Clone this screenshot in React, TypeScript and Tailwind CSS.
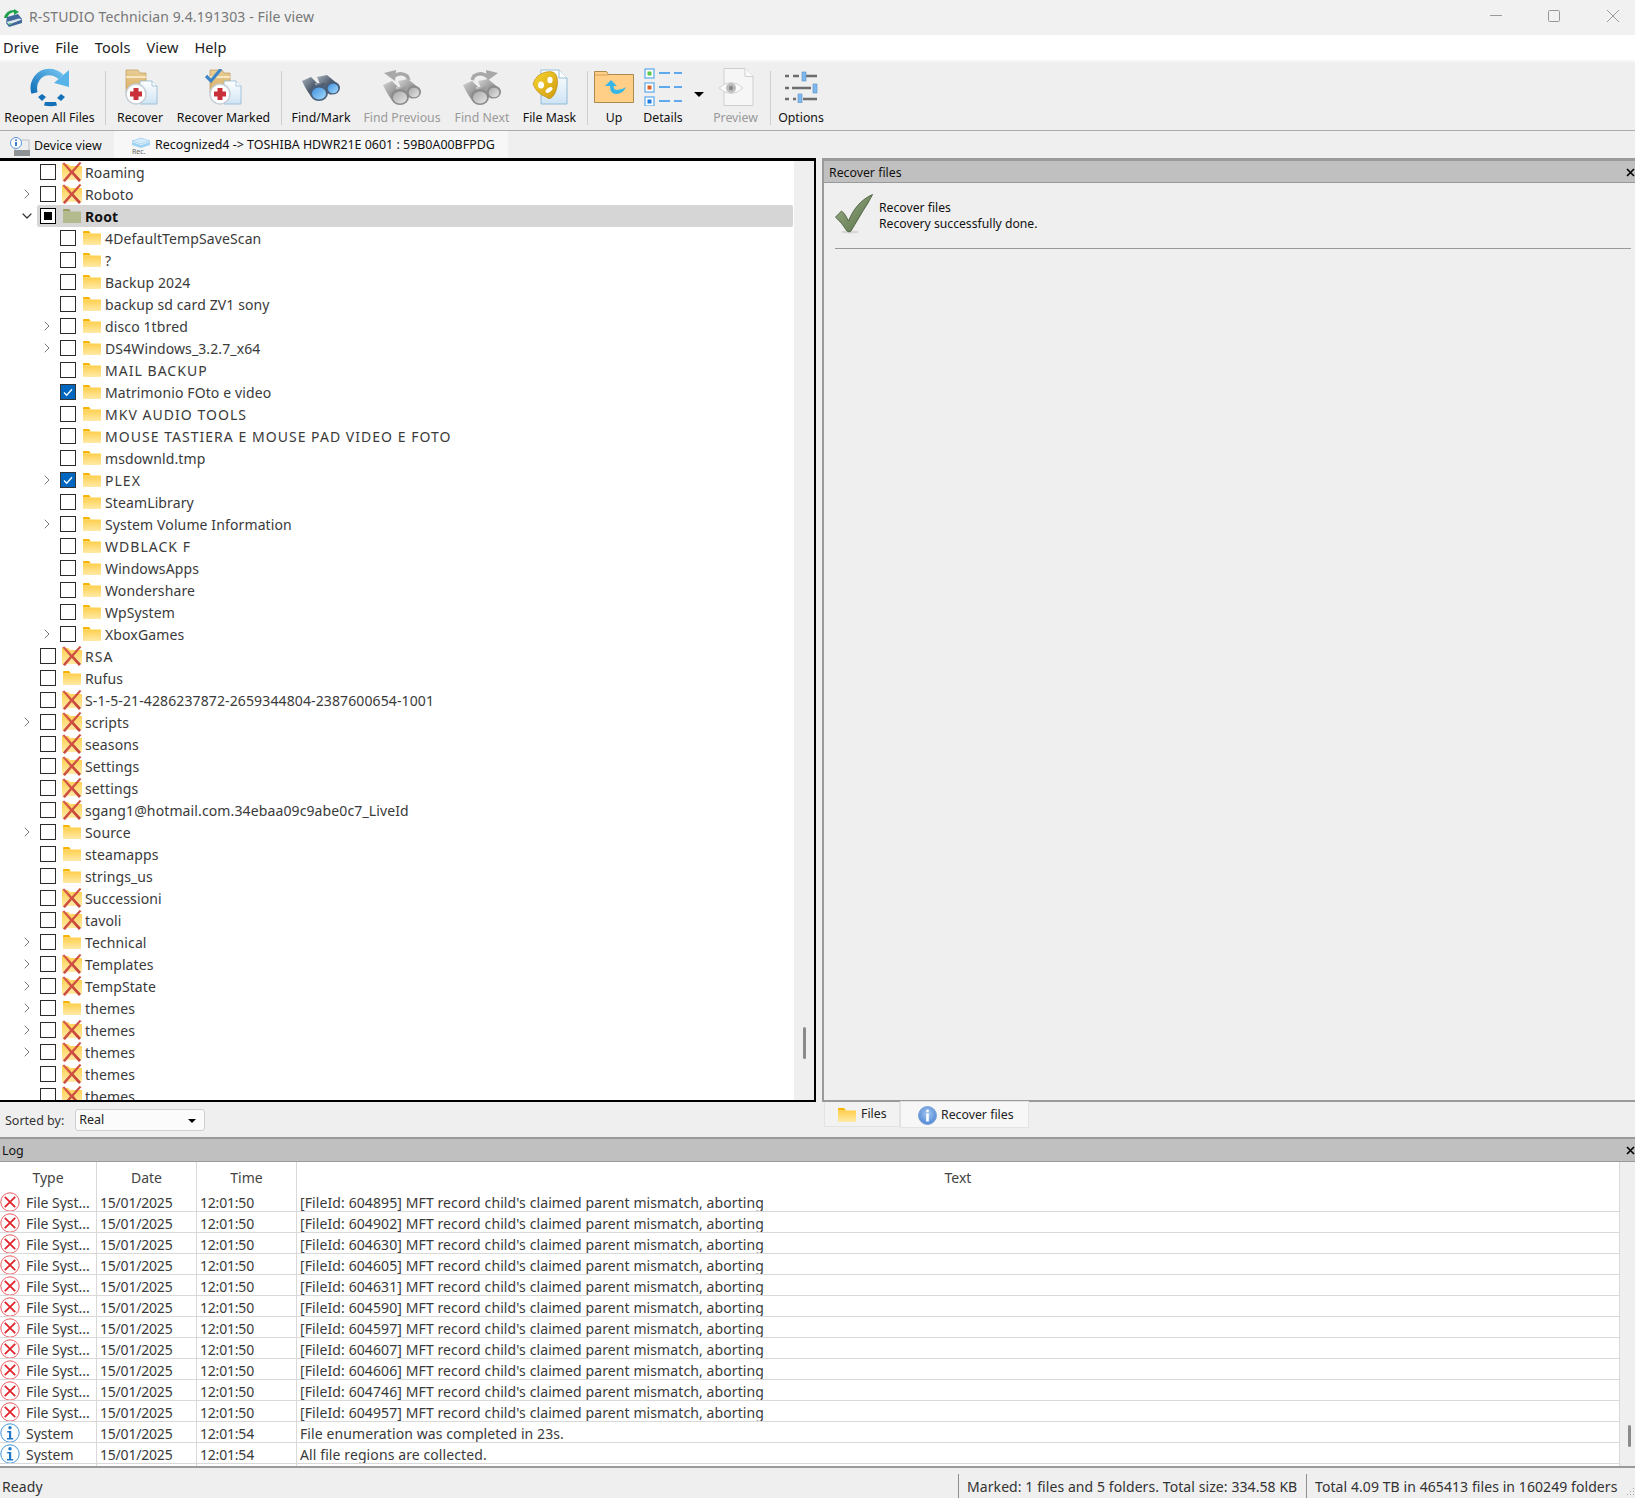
import { ChevronDown, ChevronRight } from "lucide-react";

type Icon = "x" | "folder" | "root";
type Mark = "none" | "checked" | "mixed";
type Row = { name: string; icon: Icon; depth: 1 | 2; chevron?: boolean; mark?: Mark };

const d1 = (name: string, icon: Icon, chevron = false): Row => ({ name, icon, depth: 1, chevron });
const d2 = (name: string, chevron = false, mark: Mark = "none"): Row => ({ name, icon: "folder", depth: 2, chevron, mark });

const treeRows: Row[] = [
	d1("Roaming", "x"),
	d1("Roboto", "x", true),
	{ name: "Root", icon: "root", depth: 1, mark: "mixed" },
	d2("4DefaultTempSaveScan"),
	d2("?"),
	d2("Backup 2024"),
	d2("backup sd card ZV1 sony"),
	d2("disco 1tbred", true),
	d2("DS4Windows_3.2.7_x64", true),
	d2("MAIL BACKUP"),
	d2("Matrimonio FOto e video", false, "checked"),
	d2("MKV AUDIO TOOLS"),
	d2("MOUSE TASTIERA E MOUSE PAD VIDEO E FOTO"),
	d2("msdownld.tmp"),
	d2("PLEX", true, "checked"),
	d2("SteamLibrary"),
	d2("System Volume Information", true),
	d2("WDBLACK F"),
	d2("WindowsApps"),
	d2("Wondershare"),
	d2("WpSystem"),
	d2("XboxGames", true),
	d1("RSA", "x"),
	d1("Rufus", "folder"),
	d1("S-1-5-21-4286237872-2659344804-2387600654-1001", "x"),
	d1("scripts", "x", true),
	d1("seasons", "x"),
	d1("Settings", "x"),
	d1("settings", "x"),
	d1("sgang1@hotmail.com.34ebaa09c9abe0c7_LiveId", "x"),
	d1("Source", "folder", true),
	d1("steamapps", "folder"),
	d1("strings_us", "folder"),
	d1("Successioni", "x"),
	d1("tavoli", "x"),
	d1("Technical", "folder", true),
	d1("Templates", "x", true),
	d1("TempState", "x", true),
	d1("themes", "folder", true),
	d1("themes", "x", true),
	d1("themes", "x", true),
	d1("themes", "x"),
	d1("themes", "x"),
];

const logRows = [
	"604895", "604902", "604630", "604605", "604631", "604590", "604597", "604607", "604606", "604746", "604957",
].map((id) => ({
	kind: "error",
	type: "File Syst...",
	time: "12:01:50",
	text: `[FileId: ${id}] MFT record child's claimed parent mismatch, aborting`,
}));
logRows.push(
	{ kind: "info", type: "System", time: "12:01:54", text: "File enumeration was completed in 23s." },
	{ kind: "info", type: "System", time: "12:01:54", text: "All file regions are collected." },
);

function Defs() {
	return (
		<svg className="block w-0 h-0">
			<defs>
				<linearGradient id="fold" x1="0" y1="0" x2="0" y2="1">
					<stop offset="0" stopColor="#ffcf4d" />
					<stop offset="1" stopColor="#ffeaa6" />
				</linearGradient>
				<linearGradient id="redx" x1="0" y1="0" x2="1" y2="1">
					<stop offset="0" stopColor="#d9604f" />
					<stop offset="1" stopColor="#c23f35" />
				</linearGradient>
				<linearGradient id="arc" x1="0" y1="1" x2="1" y2="0">
					<stop offset="0" stopColor="#1471b8" />
					<stop offset="1" stopColor="#6cc0ee" />
				</linearGradient>
				<linearGradient id="tan" x1="0" y1="0" x2="0" y2="1">
					<stop offset="0" stopColor="#e9cf98" />
					<stop offset="1" stopColor="#d9a95a" />
				</linearGradient>
				<linearGradient id="pg" x1="0" y1="0" x2="0" y2="1">
					<stop offset="0" stopColor="#ffffff" />
					<stop offset="1" stopColor="#cfe4f4" />
				</linearGradient>
				<linearGradient id="binD" x1="0" y1="0" x2="1" y2="1">
					<stop offset="0" stopColor="#a6b0bc" />
					<stop offset="0.5" stopColor="#4d596a" />
					<stop offset="1" stopColor="#738096" />
				</linearGradient>
				<linearGradient id="binG" x1="0" y1="0" x2="1" y2="1">
					<stop offset="0" stopColor="#d2d2d2" />
					<stop offset="0.5" stopColor="#989898" />
					<stop offset="1" stopColor="#b4b4b4" />
				</linearGradient>
				<linearGradient id="lens" x1="0" y1="0" x2="1" y2="1">
					<stop offset="0" stopColor="#3f8fe0" />
					<stop offset="1" stopColor="#a5dcfb" />
				</linearGradient>
				<linearGradient id="lensG" x1="0" y1="0" x2="1" y2="1">
					<stop offset="0" stopColor="#a9a9a9" />
					<stop offset="1" stopColor="#e6e6e6" />
				</linearGradient>
				<linearGradient id="mask" x1="0" y1="0" x2="1" y2="1">
					<stop offset="0" stopColor="#f7d52e" />
					<stop offset="1" stopColor="#cf9a12" />
				</linearGradient>
				<linearGradient id="tick" x1="0" y1="0" x2="1" y2="1">
					<stop offset="0" stopColor="#9fb08a" />
					<stop offset="1" stopColor="#546f45" />
				</linearGradient>
				<radialGradient id="infoB" cx="0.5" cy="0.4" r="0.6">
					<stop offset="0" stopColor="#a7c8f2" />
					<stop offset="1" stopColor="#4f86d4" />
				</radialGradient>
			</defs>
		</svg>
	);
}

function FolderIcon({ muted = false }: { muted?: boolean }) {
	return (
		<svg width="18" height="14" viewBox="0 0 18 14" className="block">
			<path d="M0 2.5V1.2C0 .5.5 0 1.2 0H6l2 2.5z" fill={muted ? "#9a9c62" : "#f7b500"} />
			<rect x="0" y="2.5" width="18" height="11.5" fill={muted ? "#b3ba8d" : "url(#fold)"} />
		</svg>
	);
}

function DeletedFolder() {
	return (
		<svg width="20" height="20" viewBox="0 0 20 20" className="block">
			<path d="M0 2h6l2 2h12v14H0z" fill="url(#fold)" />
			<path d="M.3 1.2L2.4.6l7.4 7.9L17.6 0l1.9 1-7.9 9.1 7.4 8-2 1.9-7.2-8.1L3 20 .8 18.6 8 10.2z" fill="url(#redx)" />
		</svg>
	);
}

function TreeCheck({ mark = "none" }: { mark?: Mark }) {
	if (mark === "checked") {
		return (
			<span className="w-[16px] h-[16px] shrink-0 flex items-center justify-center bg-[#0067c0] border border-[#333]">
				<svg width="12" height="12" viewBox="0 0 12 12">
					<path d="M2 6.5l2.7 2.7L10 3.2" fill="none" stroke="#fff" strokeWidth="1.3" />
				</svg>
			</span>
		);
	}
	if (mark === "mixed") {
		return (
			<span className="w-[16px] h-[16px] shrink-0 flex items-center justify-center bg-white border-[1.5px] border-black">
				<span className="block w-[8px] h-[8px] bg-black" />
			</span>
		);
	}
	return <span className="block w-[16px] h-[16px] shrink-0 bg-white border-[1.5px] border-[#2a2a2a]" />;
}

function TreeRow({ row }: { row: Row }) {
	const isRoot = row.icon === "root";
	// the capitals sit wider in the reference font
	const isCaps = /^[A-Z0-9 ]+$/.test(row.name);
	return (
		<div className={`flex items-center h-[22px] shrink-0 ${row.depth === 2 ? "pl-[40px]" : "pl-[20px]"}`}>
			<span className="w-[14px] mr-[6px] flex justify-center shrink-0">
				{row.chevron && <ChevronRight size={16} strokeWidth={1.5} className="text-[#777] shrink-0" />}
				{isRoot && <ChevronDown size={16} strokeWidth={1.8} className="text-[#333] shrink-0" />}
			</span>
			<div className={`flex-1 flex items-center h-[22px] -ml-[3px] pl-[3px] mr-[1px] rounded-[2px] ${isRoot ? "bg-[#d6d6d6]" : ""}`}>
				<TreeCheck mark={row.mark} />
				<span className="ml-[6px] w-[20px] flex justify-center shrink-0">
					{row.icon === "x" ? <DeletedFolder /> : <FolderIcon muted={isRoot} />}
				</span>
				<span
					className={`ml-[3px] whitespace-nowrap ${isRoot ? "font-bold text-[#111]" : "text-[#3a3a3a]"} ${isCaps ? "tracking-[1.03px]" : "tracking-[0.12px]"}`}
				>
					{row.name}
				</span>
			</div>
		</div>
	);
}

function ReopenIcon() {
	return (
		<svg width="42" height="40" viewBox="0 0 42 40">
			<path d="M5.5 26C2.5 15 10 5 20 5c5 0 9 2 12 5" fill="none" stroke="url(#arc)" strokeWidth="6.5" />
			<path d="M40 3v17l-15-4z" fill="#58b4e8" />
			<path d="M9 30l4-3 4 3-4 4zM32 27l4 3-4 4-4-3z" fill="#1471b8" />
			<path d="M16 35h11l1 3.5q-6 1.5-13 0z" fill="#1471b8" />
		</svg>
	);
}

function RecoverIcon({ marked = false }: { marked?: boolean }) {
	return (
		<svg width="38" height="36" viewBox="0 0 38 36">
			<path d="M5 1h12l2 3h6v20H5z" fill="url(#tan)" stroke="#b78d4a" strokeWidth=".6" />
			<path d="M5 8h20" stroke="#fff6df" strokeWidth="1.4" />
			<path d="M19 12h12l5 5v18H19z" fill="url(#pg)" stroke="#8fb7d4" strokeWidth=".8" />
			<path d="M31 12v5h5" fill="#fff" stroke="#8fb7d4" strokeWidth=".8" />
			<circle cx="15" cy="25" r="10" fill="#fff" stroke="#c6cfd6" strokeWidth="1.5" />
			<path d="M12.5 19h5v3.5H21v5h-3.5V31h-5v-3.5H9v-5h3.5z" fill="#c8303a" />
			{marked && <path d="M1 7l5 5L16 0" fill="none" stroke="#3f86c6" strokeWidth="3.2" />}
		</svg>
	);
}

function Binoculars({ off = false }: { off?: boolean }) {
	const body = off ? "url(#binG)" : "url(#binD)";
	const glass = off ? "url(#lensG)" : "url(#lens)";
	return (
		<g>
			<path d="M1 6l9-4 12 12-8 11q-6-4-13-19z" fill={body} />
			<path d="M16 2l10-2 12 10-8 10-8-4z" fill={body} />
			<path d="M14 8h10v6H14z" fill={body} />
			<ellipse cx="18" cy="18" rx="9" ry="8" fill={off ? "#8c8c8c" : "#4a5f7a"} />
			<ellipse cx="18" cy="18.5" rx="7" ry="6" fill={glass} />
			<ellipse cx="32" cy="13" rx="7" ry="6.5" fill={off ? "#8c8c8c" : "#4a5f7a"} />
			<ellipse cx="32" cy="13.5" rx="5.2" ry="4.8" fill={glass} />
		</g>
	);
}

function FindIcon({ arrow }: { arrow?: "prev" | "next" }) {
	return (
		<svg width="42" height="38" viewBox="0 0 42 38">
			{arrow === "prev" && (
				<>
					<path d="M12 9q7-6 14 -1l2 4" fill="none" stroke="#a8a8a8" strokeWidth="3.5" />
					<path d="M3 5l12-3-1 11z" fill="#a8a8a8" />
				</>
			)}
			{arrow === "next" && (
				<>
					<path d="M27 9q-7-6-14 -1l-2 4" fill="none" stroke="#a8a8a8" strokeWidth="3.5" />
					<path d="M37 5l-12-3 1 11z" fill="#a8a8a8" />
				</>
			)}
			<g transform={arrow ? "translate(1 11)" : "translate(1 7)"}>
				<Binoculars off={!!arrow} />
			</g>
		</svg>
	);
}

function MaskIcon() {
	return (
		<svg width="36" height="36" viewBox="0 0 36 36">
			<path d="M9 1h18l8 8v26H9z" fill="url(#pg)" stroke="#7fb0d0" strokeWidth=".8" />
			<path d="M27 1v8h8" fill="#fff" stroke="#7fb0d0" strokeWidth=".8" />
			<path d="M1 15Q4 5 14 3q9-2 11 5 2 9-3 18-4 6-8 2Q5 25 1 15z" fill="url(#mask)" stroke="#b58510" strokeWidth=".6" />
			<ellipse cx="9" cy="16" rx="3" ry="3.5" fill="#fff" />
			<ellipse cx="18" cy="11" rx="2.6" ry="3.2" fill="#fff" />
			<ellipse cx="17" cy="21" rx="4" ry="2" transform="rotate(-35 17 21)" fill="#fff" />
		</svg>
	);
}

function UpIcon() {
	return (
		<svg width="40" height="32" viewBox="0 0 40 32">
			<path d="M.5 31.5V.5h12l2 3H39.5v28z" fill="#ffcf87" stroke="#a98b4e" />
			<path d="M.5 4h14" stroke="#d9a054" strokeWidth="1" />
			<path d="M11 15l6-6 6 6h-3.5q0 4 3.5 4 5 0 9-3-3 7-10 7-6 0-6-8z" fill="#35b6e8" />
		</svg>
	);
}

function DetailsIcon() {
	const rows = [
		{ y: 0, dot: "#57c84d" },
		{ y: 14, dot: "#d8612a" },
		{ y: 28, dot: "#1f7fe0" },
	];
	return (
		<svg width="39" height="38" viewBox="0 0 39 38">
			{rows.map((r) => (
				<g key={r.y}>
					<rect x="1" y={r.y + 1} width="9" height="9" fill="#fff" stroke="#6fb2ec" strokeWidth="1.4" />
					<rect x="3.5" y={r.y + 3.5} width="4" height="4" fill={r.dot} />
					<path d={`M15 ${r.y + 5}h11M30 ${r.y + 5}h8`} stroke="#2e93ea" strokeWidth="1.5" />
				</g>
			))}
		</svg>
	);
}

function PreviewIcon() {
	return (
		<svg width="36" height="38" viewBox="0 0 36 38">
			<path d="M6 .5h21l8 8v29H6z" fill="#f6f6f6" stroke="#cfcfcf" />
			<path d="M27 .5v8h8" fill="#fafafa" stroke="#cfcfcf" />
			<path d="M1 20q12-11 24 0-12 11-24 0z" fill="#fbfbfb" stroke="#d2d2d2" />
			<circle cx="13" cy="20" r="5" fill="#bdbdbd" />
			<circle cx="13" cy="20" r="2.2" fill="#8a8a8a" />
		</svg>
	);
}

function OptionsIcon() {
	return (
		<svg width="33" height="32" viewBox="0 0 33 32">
			<path d="M0 5h4M8 5h6M21 5h11M0 17h4M7 17h19M0 28h4M8 28h3M18 28h14" stroke="#6d6d6d" strokeWidth="2.4" />
			<rect x="17" y="1" width="4" height="9" fill="#7db8ef" stroke="#5d8fc0" strokeWidth=".6" />
			<rect x="28" y="13" width="4" height="9" fill="#7db8ef" stroke="#5d8fc0" strokeWidth=".6" />
			<rect x="13" y="23" width="4" height="9" fill="#7db8ef" stroke="#5d8fc0" strokeWidth=".6" />
		</svg>
	);
}

function TickIcon() {
	return (
		<svg width="38" height="40" viewBox="0 0 38 40">
			<ellipse cx="15" cy="38" rx="9" ry="1.5" fill="#d5d5d5" />
			<path d="M.5 23l6-6c3 2 5 6 7 10C18 16 25 6 37.5.5 37 2 35 5 33 9 27 18 21 29 16 37c-1 1-3 1-4 0Q7 29 .5 23z" fill="url(#tick)" stroke="#3f5534" strokeWidth=".8" />
		</svg>
	);
}

function ErrorIcon() {
	return (
		<svg width="20" height="20" viewBox="0 0 20 20" className="shrink-0">
			<circle cx="10" cy="10" r="9.2" fill="#fff" stroke="#ea5a5f" strokeWidth="1" />
			<path d="M4.8 4.8l10.4 10.4M15.2 4.8L4.8 15.2" stroke="#e0242c" strokeWidth="1.8" />
		</svg>
	);
}

function InfoIcon() {
	return (
		<svg width="20" height="20" viewBox="0 0 20 20" className="shrink-0">
			<circle cx="10" cy="10" r="9.2" fill="#fff" stroke="#3f94d8" strokeWidth="1" />
			<circle cx="10" cy="4.8" r="1.7" fill="#1f78c8" />
			<path d="M7.2 8h4v7h2v1.6H7v-1.6h2V9.6H7.2z" fill="#1f78c8" />
		</svg>
	);
}

function AppIcon() {
	return (
		<svg width="20" height="18" viewBox="0 0 20 18">
			<path d="M1 9q2-8 10-8l1 2q-6 0-8 6z" fill="#1fa14a" />
			<path d="M11 0l5 3-5 3z" fill="#1fa14a" />
			<path d="M4 8l11-3 4 5v4L6 18l-3-4z" fill="#43699c" />
			<path d="M3.5 13L16 9.5l3 1-13 5z" fill="#dfe7ee" />
			<circle cx="7" cy="15" r="1" fill="#2fd04f" />
		</svg>
	);
}

function DeviceIcon() {
	return (
		<svg width="20" height="19" viewBox="0 0 20 19">
			<rect x="5" y="3" width="14" height="11" fill="#eceef0" stroke="#a8adb2" strokeWidth=".7" />
			<rect x="4" y="13" width="16" height="6" fill="#8d9297" />
			<circle cx="6" cy="6" r="5.5" fill="#fff" stroke="#5e94d6" />
			<path d="M5 5h2v4H5zM5 2.5h2v1.6H5z" fill="#3f7fd0" />
		</svg>
	);
}

function RecIcon() {
	return (
		<svg width="20" height="17" viewBox="0 0 20 17">
			<path d="M1 4l9-3 9 3-9 3z" fill="#d5ecfb" stroke="#8ec6ea" strokeWidth=".6" />
			<path d="M1 5v3l9 3 9-3V5l-9 3z" fill="#9fd3f3" />
			<text x="1" y="16.5" fontSize="7" fill="#666" fontFamily="Noto Sans">Rec.</text>
		</svg>
	);
}

function WindowButtons() {
	return (
		<div className="ml-auto flex items-center mr-[16px] text-[#999]">
			<svg width="12" height="12" viewBox="0 0 12 12" className="mb-[3px]">
				<path d="M0 5.5h12" stroke="currentColor" />
			</svg>
			<svg width="12" height="12" viewBox="0 0 12 12" className="ml-[46px] mb-[3px]">
				<rect x=".5" y=".5" width="11" height="11" rx="1" fill="none" stroke="currentColor" />
			</svg>
			<svg width="12" height="12" viewBox="0 0 12 12" className="ml-[47px] mb-[3px]">
				<path d="M0 0l12 12M12 0L0 12" stroke="currentColor" />
			</svg>
		</div>
	);
}

function ToolButton({ label, width, off = false, children }: { label: string; width: string; off?: boolean; children: React.ReactNode }) {
	return (
		<div className={`flex flex-col items-center shrink-0 ${width}`}>
			<div className="h-[44px] flex items-center justify-center">{children}</div>
			<span className={`mt-[1px] text-[12.3px] leading-[16px] whitespace-nowrap ${off ? "text-[#9a9a9a]" : "text-[#111]"}`}>{label}</span>
		</div>
	);
}

function ToolSep({ className }: { className: string }) {
	return <div className={`w-px h-[54px] bg-[#cfcfcf] shrink-0 self-center ${className}`} />;
}

function Toolbar() {
	return (
		<div className="h-[68px] flex items-start pt-[3px] bg-[#efefef] border-b-0 shrink-0">
			<ToolButton label="Reopen All Files" width="w-[99px]">
				<ReopenIcon />
			</ToolButton>
			<ToolSep className="ml-[6px]" />
			<ToolButton label="Recover" width="w-[68px]">
				<RecoverIcon />
			</ToolButton>
			<ToolButton label="Recover Marked" width="w-[99px]">
				<RecoverIcon marked />
			</ToolButton>
			<ToolSep className="ml-[8px]" />
			<ToolButton label="Find/Mark" width="w-[78px]">
				<FindIcon />
			</ToolButton>
			<ToolButton label="Find Previous" width="w-[84px]" off>
				<FindIcon arrow="prev" />
			</ToolButton>
			<ToolButton label="Find Next" width="w-[76px]" off>
				<FindIcon arrow="next" />
			</ToolButton>
			<ToolButton label="File Mask" width="w-[59px]">
				<MaskIcon />
			</ToolButton>
			<ToolSep className="ml-[8px]" />
			<ToolButton label="Up" width="w-[52px]">
				<UpIcon />
			</ToolButton>
			<ToolButton label="Details" width="w-[46px]">
				<DetailsIcon />
			</ToolButton>
			<div className="w-[20px] h-[44px] flex items-center justify-center pl-[6px] shrink-0">
				<span className="block mt-[14px] border-x-[5px] border-x-transparent border-t-[5px] border-t-black" />
			</div>
			<ToolButton label="Preview" width="w-[59px]" off>
				<PreviewIcon />
			</ToolButton>
			<ToolSep className="ml-[5px]" />
			<ToolButton label="Options" width="w-[60px]">
				<OptionsIcon />
			</ToolButton>
		</div>
	);
}

function PanelClose() {
	return (
		<svg width="9" height="9" viewBox="0 0 9 9" className="ml-auto -mt-[2px]">
			<path d="M1 1l7 7M8 1L1 8" stroke="#000" strokeWidth="1.6" />
		</svg>
	);
}

function LogCell({ className, children }: { className: string; children: React.ReactNode }) {
	return <div className={`flex items-center pt-[2px] border-r border-[#d9d9d9] whitespace-nowrap overflow-hidden ${className}`}>{children}</div>;
}

export default function App() {
	return (
		<div className="w-[1635px] h-[1498px] flex flex-col overflow-hidden bg-[#efefef] text-[14px] text-[#222] font-['Noto_Sans','Open_Sans',sans-serif]">
			<Defs />
			{/* title bar */}
			<div className="h-[35px] flex items-center pl-[3px] bg-[#f1f1f1] shrink-0">
				<AppIcon />
				<span className="ml-[6px] mb-[2px] text-[14px] tracking-[0.12px] text-[#777] whitespace-nowrap">R-STUDIO Technician 9.4.191303 - File view</span>
				<WindowButtons />
			</div>
			{/* menu */}
			<div className="h-[25px] flex items-center gap-4 pl-[3px] bg-white shrink-0 text-[14.5px] tracking-[0.08px] text-[#222]">
				<span>Drive</span>
				<span>File</span>
				<span>Tools</span>
				<span>View</span>
				<span>Help</span>
			</div>
			<div className="h-[2px] bg-[#f7f7f7] shrink-0" />
			<Toolbar />
			<div className="h-px bg-[#ababab] shrink-0" />
			{/* document tabs */}
			<div className="h-[27px] flex shrink-0 text-[12.45px] text-[#111]">
				<div className="w-[114px] flex items-center pl-[10px] pt-[3px] gap-[4px]">
					<DeviceIcon />
					<span className="whitespace-nowrap">Device view</span>
				</div>
				<div className="w-[394px] flex items-center pl-[17px] pt-[2px] gap-[4px] bg-[#f7f7f7]">
					<RecIcon />
					<span className="whitespace-nowrap">Recognized4 -&gt; TOSHIBA HDWR21E 0601 : 59B0A00BFPDG</span>
				</div>
			</div>
			{/* tree + recover panel */}
			<div className="h-[944px] flex shrink-0">
				<div className="w-[816px] flex border-t-[3px] border-b-[2px] border-r-[2px] border-black shrink-0">
					<div className="w-[794px] flex flex-col overflow-hidden bg-white shrink-0">
						{treeRows.map((row, i) => (
							<TreeRow key={i} row={row} />
						))}
					</div>
					<div className="flex-1 flex flex-col items-center bg-[#efefef]">
						<div className="w-[3px] h-[32px] mt-[866px] rounded-[2px] bg-[#8a8a8a]" />
					</div>
				</div>
				<div className="ml-[6px] flex-1 flex flex-col border-t-[3px] border-b-[2px] border-l-[2px] border-[#9a9a9a]">
					<div className="h-[22px] flex items-center pl-[5px] pt-[3px] bg-[#c0c0c0] border-b border-[#9a9a9a] shrink-0 text-[12.3px] text-[#111]">
						Recover files
						<PanelClose />
					</div>
					<div className="flex-1 pl-[11px] pr-[4px] pt-[11px]">
						<div className="flex h-[55px] border-b border-[#9a9a9a]">
							<TickIcon />
							<div className="ml-[6px] pt-[6px] text-[12.2px] leading-[16px] text-[#111]">
								<div>Recover files</div>
								<div>Recovery successfully done.</div>
							</div>
						</div>
					</div>
				</div>
			</div>
			{/* sort row + panel tabs */}
			<div className="h-[35px] flex shrink-0">
				<div className="w-[824px] flex items-start pt-[7px] pl-[5px] shrink-0">
					<span className="pt-[1px] text-[12.5px] leading-[22px] text-[#333] whitespace-nowrap">Sorted by:</span>
					<div className="ml-[11px] w-[130px] h-[22px] flex items-center pl-[3px] pt-[1px] pr-[8px] bg-[#fbfbfb] border border-[#cfcfcf] rounded-[3px] text-[12.5px] text-[#222]">
						Real
						<span className="ml-auto border-x-[4px] border-x-transparent border-t-[4px] border-t-black" />
					</div>
				</div>
				<div className="w-[76px] h-[25px] flex items-center pl-[13px] pt-[1px] gap-[5px] bg-[#f2f2f2] border border-t-0 border-[#e3e3e3] text-[12.3px] text-[#222] shrink-0">
					<FolderIcon />
					Files
				</div>
				<div className="w-[129px] h-[27px] -mt-px flex items-center pl-[17px] pt-[1px] gap-[4px] bg-[#f7f7f7] border border-[#e3e3e3] text-[12.3px] text-[#222] shrink-0">
					<svg width="19" height="19" viewBox="0 0 19 19">
						<circle cx="9.5" cy="9.5" r="9" fill="url(#infoB)" stroke="#7fa4d8" />
						<circle cx="9.5" cy="4.8" r="1.4" fill="#fff" />
						<rect x="8.2" y="7.5" width="2.6" height="8" fill="#fff" />
					</svg>
					Recover files
				</div>
			</div>
			{/* log */}
			<div className="h-[331px] flex flex-col border-t-2 border-b-2 border-[#9a9a9a] shrink-0">
				<div className="h-[23px] flex items-center pl-[2px] pt-[2px] bg-[#c0c0c0] border-b border-[#9a9a9a] shrink-0 text-[12.5px] text-[#111]">
					Log
					<PanelClose />
				</div>
				<div className="flex-1 flex min-h-0">
					<div className="w-[1620px] flex flex-col bg-white border-r border-[#d9d9d9] shrink-0">
						<div className="h-[29px] grid grid-cols-[97px_100px_100px_1fr] text-[#444] shrink-0">
							<LogCell className="justify-center">Type</LogCell>
							<LogCell className="justify-center">Date</LogCell>
							<LogCell className="justify-center">Time</LogCell>
							<LogCell className="justify-center border-r-0">Text</LogCell>
						</div>
						{logRows.map((row, i) => (
							<div key={i} className="h-[21px] grid grid-cols-[97px_100px_100px_1fr] border-b border-[#d9d9d9] text-[#3a3a3a] shrink-0">
								<LogCell className="">
									{row.kind === "error" ? <ErrorIcon /> : <InfoIcon />}
									<span className="ml-[6px]">{row.type}</span>
								</LogCell>
								<LogCell className="pl-[3px] tracking-[-0.2px]">15/01/2025</LogCell>
								<LogCell className="pl-[3px] tracking-[-0.2px]">{row.time}</LogCell>
								<LogCell className="pl-[3px] tracking-[0.1px] border-r-0">{row.text}</LogCell>
							</div>
						))}
						<div className="flex-1 grid grid-cols-[97px_100px_100px_1fr]">
							<div className="border-r border-[#d9d9d9]" />
							<div className="border-r border-[#d9d9d9]" />
							<div className="border-r border-[#d9d9d9]" />
						</div>
					</div>
					<div className="flex-1 flex justify-center">
						<div className="w-[3px] h-[22px] mt-[263px] ml-[4px] rounded-[2px] bg-[#8a8a8a]" />
					</div>
				</div>
			</div>
			{/* status bar */}
			<div className="flex-1 flex items-end text-[14px] tracking-[0.08px] text-[#333]">
				<span className="pl-[2px] w-[958px] h-[24px] flex items-center shrink-0">Ready</span>
				<div className="w-[348px] h-[24px] flex items-center pl-[8px] border-l border-[#8f8f8f] shrink-0 whitespace-nowrap">
					Marked: 1 files and 5 folders. Total size: 334.58 KB
				</div>
				<div className="w-[329px] h-[24px] flex items-center pl-[8px] border-l border-[#8f8f8f] whitespace-nowrap">
					Total 4.09 TB in 465413 files in 160249 folders
					<svg width="10" height="10" viewBox="0 0 10 10" className="ml-auto self-end mb-[1px]">
						<path d="M8 1h1v1H8zM5 4h1v1H5zM8 4h1v1H8zM2 7h1v1H2zM5 7h1v1H5zM8 7h1v1H8z" fill="#a8a8a8" />
					</svg>
				</div>
			</div>
		</div>
	);
}
